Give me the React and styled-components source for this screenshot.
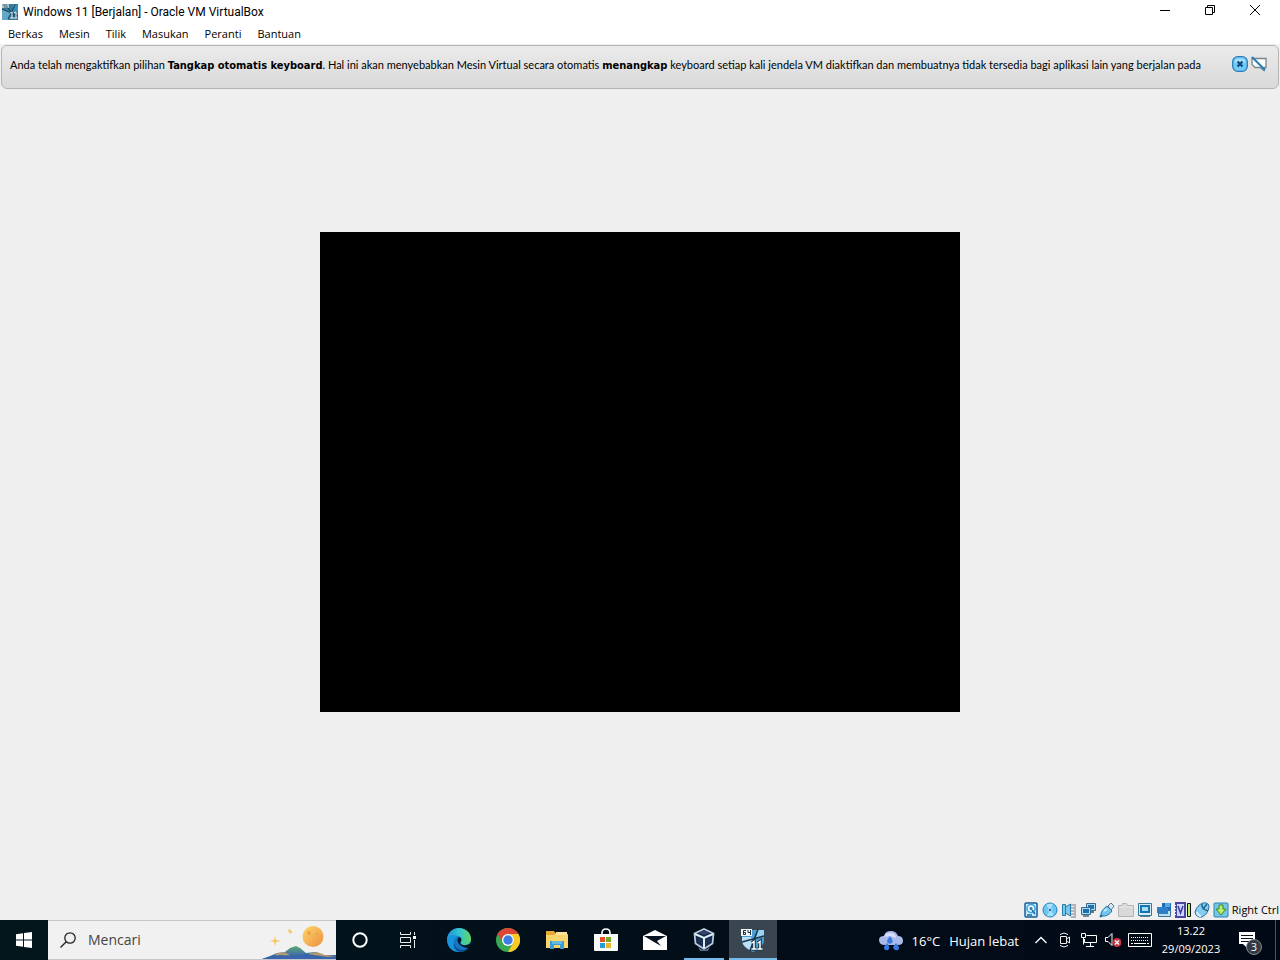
import React from "react";
import styled, { createGlobalStyle, css } from "styled-components";

const GlobalStyle = createGlobalStyle`
  *, *::before, *::after { box-sizing: border-box; }
  html, body, #root { height: 100%; }
  body { margin: 0; background: #efefef; }
  button, input { font: inherit; color: inherit; }
`;

const Desktop = styled.div`
  display: flex;
  flex-direction: column;
  min-height: 100vh;
  color: #000;
  font-family: "Open Sans", sans-serif;
  font-size: 12px;
  line-height: 16px;
`;

const TitleBar = styled.header`
  display: flex;
  align-items: center;
  height: 24px;
  padding: 0 3px 0 2px;
  background: #fff;
`;

const Title = styled.h1`
  flex: 1;
  margin: 0 0 0 5px;
  font-family: Roboto, sans-serif;
  font-size: 12px;
  font-weight: 400;
  line-height: 16px;
  white-space: nowrap;
`;

const PlainButton = styled.button`
  display: flex;
  align-items: center;
  justify-content: center;
  padding: 0;
  border: 0;
  background: transparent;
`;

const WindowButton = styled(PlainButton)`
  width: 45px;
  height: 24px;
  padding-bottom: 4px;
`;

const MenuBar = styled.nav`
  display: flex;
  height: 20px;
  background: #fff;
`;

const MenuItem = styled(PlainButton)`
  padding: 0 8px;
  font-size: 11px;
`;

const Stage = styled.main`
  flex: 1;
  display: flex;
  flex-direction: column;
`;

const Banner = styled.section`
  display: flex;
  align-items: flex-start;
  justify-content: space-between;
  height: 44px;
  margin: 1px 1px 0;
  padding: 10px 11px 0 8px;
  border: 1px solid #b4b4b4;
  border-radius: 6px;
  background: linear-gradient(#ebebeb, #d9d9d9);
`;

const BannerText = styled.p`
  margin: 1px 0 0;
  font-family: Lato, sans-serif;
  font-size: 11px;
  line-height: 16px;
  white-space: nowrap;
  b { font-family: "DejaVu Sans Condensed", "DejaVu Sans", sans-serif; }
`;

const BannerActions = styled.div`
  display: flex;
  gap: 3px;
`;

const ScreenArea = styled.div`
  flex: 1;
  display: grid;
  place-items: center;
  padding-bottom: 45px;
`;

const GuestScreen = styled.div`
  width: 640px;
  max-width: 100%;
  aspect-ratio: 4 / 3;
  background: #000;
`;

const StatusBar = styled.footer`
  display: flex;
  align-items: center;
  justify-content: flex-end;
  gap: 3px;
  height: 20px;
  padding-right: 1px;
`;

const HostKey = styled.span`
  font-size: 11px;
  white-space: nowrap;
`;

const Taskbar = styled.div`
  display: flex;
  height: 40px;
  background: linear-gradient(90deg, #02161c, #020d18 60%, #020916);
  color: #fff;
`;

const StartButton = styled(PlainButton)`
  width: 48px;
`;

const Search = styled.label`
  display: flex;
  align-items: center;
  width: 288px;
  padding-left: 12px;
  border: 1px solid #c4c8c8;
  border-width: 1px 0;
  background: #f1f1f1;
  color: #222;
`;

const SearchInput = styled.input`
  flex: 1;
  min-width: 0;
  padding: 0;
  margin-left: 12px;
  border: 0;
  outline: 0;
  background: transparent;
  font-size: 14px;
  line-height: 20px;
  &::placeholder { color: #444; opacity: 1; }
`;

const Apps = styled.div`
  display: flex;
  gap: 1px;
  margin-left: 3px;
`;

const TaskButton = styled(PlainButton)`
  width: 48px;
  ${(p) => p.$active && css`
    background: #3a464f;
    box-shadow: inset 0 -2px #76b9ed;
  `}
  ${(p) => p.$running && css`
    background: linear-gradient(#76b9ed, #76b9ed) center bottom / 40px 2px no-repeat;
  `}
`;

const Tray = styled.div`
  display: flex;
  margin-left: auto;
`;

const Weather = styled(PlainButton)`
  gap: 9px;
  padding: 2px 10px 0 0;
  font-size: 13px;
  white-space: nowrap;
`;

const TrayButton = styled(PlainButton)`
  width: 24px;
`;

const KeyboardButton = styled(PlainButton)`
  width: 30px;
`;

const Clock = styled(PlainButton)`
  flex-direction: column;
  width: 72px;
  font-size: 11px;
  line-height: 18px;
`;

const Notifications = styled(PlainButton)`
  width: 48px;
`;

const ShowDesktop = styled(PlainButton)`
  width: 5px;
  border-left: 1px solid #4b5560;
`;

const Svg = ({ w = 16, h = w, box, children }) => (
  <svg width={w} height={h} viewBox={box || `0 0 ${w} ${h}`} fill="none" aria-hidden="true">
    {children}
  </svg>
);

const MachineIcon = ({ size }) => (
  <Svg w={size} box="0 0 24 24">
    <path d="M1 2h22v11q-1 7-11 11Q2 20 1 13z" fill="#4b9fd2" />
    <path d="M15 2h8v7l-10 3z" fill="#9ad4f5" />
    <path d="M1 9h9l2 4-3 9Q2 19 1 13z" fill="#b9e0f6" />
    <path d="M17 1L9 23M1 14l22-6" stroke="#1c3a50" strokeWidth="1.800" />
    <rect x="0" y="1" width="11" height="7" fill="#f3f7f8" />
    <path d="M5 2.500H2.500v4h2v-2h-2M7 2v2.500h2.500M9.500 2v5" stroke="#18303e" />
    <path d="M11 15l2-1.500V20.500M10.500 21h5M17 15l2-1.500V20.500M16.500 21h5" stroke="#19394d" strokeWidth="3.600" />
    <path d="M11 15l2-1.500V20.500M10.500 21h5M17 15l2-1.500V20.500M16.500 21h5" stroke="#fff" strokeWidth="1.500" />
  </Svg>
);

const SmallMachineIcon = () => (
  <Svg w={16}>
    <path d="M0 0h16v16H0z" fill="#347796" />
    <path d="M0 6l6 1 3 3-3 6H0z" fill="#63a9c7" />
    <path d="M10 1h6v6l-5 2z" fill="#378eb7" />
    <path d="M13 1L6 15M0 5l16 7M6 4l7 10" stroke="#163e56" />
    <path d="M0 0h7v4H0z" fill="#a7c1cc" />
    <path d="M1 1h4M2 3h4" stroke="#476b7b" />
    <path d="M8 9l2-1v6m2-5l2-1v6M8 14h7" stroke="#e7f4fa" />
  </Svg>
);

const HardDiskIcon = () => (
  <Svg>
    <rect x="2" y="1" width="12" height="14" rx="1" fill="#c8e8fa" stroke="#155e96" strokeWidth="1.500" />
    <circle cx="8" cy="6.500" r="4" fill="#f5fcff" stroke="#36a2de" strokeWidth="1.500" />
    <circle cx="8" cy="6.500" r="1.500" fill="#1b76b4" />
    <path d="M9 8l3 4M4 13h5" stroke="#1868a2" strokeWidth="1.500" />
  </Svg>
);
const OpticalIcon = () => (
  <Svg>
    <circle cx="8" cy="8" r="7" fill="#6cc6f2" stroke="#2782b9" />
    <path d="M8 8L4 3q4-2 7-1zM8 8l4 5q-4 2-7 1z" fill="#a7e2fb" />
    <circle cx="8" cy="8" r="1.800" fill="#226c9d" stroke="#b8e5fa" />
  </Svg>
);
const AudioIcon = () => (
  <Svg>
    <path d="M10 3h4v12h-4M10 6h3m-3 3h3m-3 3h3" stroke="#b0b5ba" strokeWidth="2" />
    <path d="M1.500 2.500h3v11h-3zM4.500 5l5-3v12l-5-3z" fill="#76c8ee" stroke="#2b7ba8" />
  </Svg>
);
const NetworkIcon = () => (
  <Svg>
    <path d="M6.500 1.500h9v7h-9z" fill="#aadcf5" stroke="#386b8e" />
    <path d="M8 3h6v4H8z" fill="#1d73b3" />
    <path d="M9 10h5" stroke="#687681" strokeWidth="2" />
    <path d="M1.500 5.500h9v7h-9z" fill="#aadcf5" stroke="#386b8e" />
    <path d="M3 7h6v4H3z" fill="#1b70b1" />
    <path d="M3 14h6" stroke="#788793" strokeWidth="2" />
  </Svg>
);
const UsbIcon = () => (
  <Svg>
    <path d="M2 14Q1 9 8 4l5 5q-4 6-11 5z" fill="#6fc7f1" stroke="#287caa" />
    <path d="M9 4l3-3 3 3-3 4z" fill="#d9e8f0" stroke="#4d7e99" />
    <path d="M1 15l2-2" stroke="#276c95" strokeWidth="2" />
    <path d="M5 9l3-2" stroke="#c8ecfd" strokeWidth="2" />
  </Svg>
);
const SharedFolderIcon = () => (
  <Svg>
    <path d="M.5 3.500h3l1-2h4l1 2h6v11H.5z" fill="#d9d9d9" stroke="#b4b4b4" />
    <path d="M1 5h14" stroke="#e9e9e9" />
  </Svg>
);
const DisplayIcon = () => (
  <Svg>
    <path d="M1.500 1.500h13v12h-13z" fill="#d8effa" stroke="#33759b" />
    <path d="M4 4h8v6H4z" fill="#a5def6" stroke="#1775b4" strokeWidth="2" />
    <path d="M3 14.500h10" stroke="#527f99" />
  </Svg>
);
const RecordingIcon = () => (
  <Svg>
    <path d="M6 1h9v8H6z" fill="#236ab4" />
    <path d="M9 1h5v4H9z" fill="#57a8de" />
    <path d="M1 5h10v6H1z" fill="#2c84ce" />
    <path d="M2.500 8.500h12v6h-12z" fill="#c0dceb" stroke="#397399" />
    <path d="M3 6h9v6H3z" fill="#2d80c8" />
  </Svg>
);
const VirtualizationIcon = () => (
  <Svg>
    <rect x="1" y="1" width="9" height="14" fill="#cfd5ff" stroke="#4548a0" strokeWidth="2" />
    <path d="M0 3.500h1m-1 3h1m-1 3h1m-1 3h1" stroke="#efefef" />
    <path d="M3 4l2.500 7L8 4" stroke="#373b9d" strokeWidth="1.500" />
    <path d="M12.500 1.500h3v13h-3z" fill="#b7ef66" stroke="#111" />
  </Svg>
);
const MouseIcon = () => (
  <Svg>
    <path d="M1 10Q3 3 9 1q6-1 6 4-1 7-7 10-6 1-7-5z" fill="#85cdf0" stroke="#2b719a" />
    <path d="M8 2q-1 5 6 7M9 7l4-5" stroke="#205f8e" strokeWidth="1.500" />
    <path d="M3 10q1 4 4 4" stroke="#d7f3ff" strokeWidth="2" />
  </Svg>
);
const HostCaptureIcon = () => (
  <Svg>
    <rect x="1" y="1" width="14" height="14" rx="1" fill="#77c6e9" stroke="#2686b0" />
    <path d="M6 3h4v4h3l-5 6-5-6h3z" fill="#b9ef68" stroke="#388326" />
  </Svg>
);

const indicators = [
  ["Hard disk", HardDiskIcon], ["Cakram optik", OpticalIcon], ["Audio", AudioIcon],
  ["Jaringan", NetworkIcon], ["USB", UsbIcon], ["Folder bersama", SharedFolderIcon],
  ["Layar", DisplayIcon], ["Perekaman", RecordingIcon], ["Virtualisasi", VirtualizationIcon],
  ["Tetikus", MouseIcon], ["Keyboard", HostCaptureIcon],
];

const LandscapeArt = () => (
  <Svg w={76} h={38}>
    <defs>
      <linearGradient id="moon" x1="0" y1="0" x2="1" y2="1">
        <stop stopColor="#ffd76b" /><stop offset="1" stopColor="#eb8f40" />
      </linearGradient>
      <linearGradient id="hills" x1="0" y1="0" x2="0" y2="1">
        <stop stopColor="#5aa86b" /><stop offset=".5" stopColor="#4a809c" /><stop offset="1" stopColor="#2953a4" />
      </linearGradient>
    </defs>
    <circle cx="53" cy="15.500" r="10.500" fill="url(#moon)" />
    <circle cx="49" cy="12" r="2" fill="#e9a64c" />
    <circle cx="57" cy="13" r="1.500" fill="#e9a64c" />
    <path d="M15 15l1 4 5 1-5 1-1 4-1-4-4-1 4-1zM30 8l1 2 2 1-2 1-1 1-1-2-1-1 1-2z" fill="#f4c65c" />
    <path d="M2 38l8-3 7-3 8-1 5-4 6-2 4 2 6 5 9-1 8 3h13v4z" fill="url(#hills)" />
    <path d="M14 33l10-2 6 3-10 2zM48 33l9-2 8 3 11 1-8 1z" fill="#b29a72" />
    <path d="M2 38l18-4 13 1 13-2 12 3 18 0v2z" fill="#3a64ad" />
  </Svg>
);

const CortanaIcon = () => <Svg w={16}><circle cx="8" cy="8" r="6.700" stroke="#fff" strokeWidth="2" /></Svg>;
const TaskViewIcon = () => (
  <Svg w={18} h={16}>
    <path d="M1.500 0v2.500h10V0M1.500 16v-2.500h10V16M1.500 5.500h10v5h-10zM15.500 0v3M15.500 8v8" stroke="#e9eeee" />
    <path d="M14 4h3v3h-3z" fill="#fff" />
  </Svg>
);
const EdgeIcon = () => (
  <Svg w={24}>
    <defs>
      <linearGradient id="edgeTop" x1="0" y1="0" x2="1" y2="0">
        <stop stopColor="#1b94dc" /><stop offset=".55" stopColor="#36c6ce" /><stop offset="1" stopColor="#65d55b" />
      </linearGradient>
    </defs>
    <circle cx="12" cy="12" r="12" fill="#1476c6" />
    <path d="M0 11C1 4 6 0 12 0c7 0 12 5 12 11 0 4-3 6-7 6-3 0-4-1-3-3 2-3 0-6-4-6-5 0-9 2-10 7z" fill="url(#edgeTop)" />
    <path d="M0 11q5-6 11-3-5 3-4 9 1 4 6 7Q1 24 0 11z" fill="#1894dc" />
    <path d="M9 10q-4 6 1 10 5 4 11 0-4 6-11 3Q4 18 9 10z" fill="#0b4e91" />
    <path d="M12 9q3 1 2 4-2 3 2 4 4 1 8-2v3l-2 2q-6 0-10-4-3-4 0-7z" fill="#061820" />
  </Svg>
);
const ChromeIcon = () => (
  <Svg w={24}>
    <circle cx="12" cy="12" r="12" fill="#39a852" />
    <path d="M1.600 6A12 12 0 0 1 22.400 6H12a6 6 0 0 0-5.200 9z" fill="#e04638" />
    <path d="M22.400 6A12 12 0 0 1 12 24l5.200-9A6 6 0 0 0 12 6z" fill="#fbc926" />
    <circle cx="12" cy="12" r="6" fill="#fff" />
    <circle cx="12" cy="12" r="4.700" fill="#3c7de2" />
  </Svg>
);
const ExplorerIcon = () => (
  <Svg w={22} h={20}>
    <path d="M0 1h8l2 3h12v14H0z" fill="#e7aa32" />
    <path d="M0 5h22v13H0z" fill="#f9d56c" />
    <path d="M10 2h11v3H9z" fill="#ffe29a" />
    <path d="M4 19v-8h14v8h-4v-4H8v4z" fill="#3b9bd5" />
    <path d="M6 11h10v3H6z" fill="#65b8e2" />
  </Svg>
);
const StoreIcon = () => (
  <Svg w={24} h={24}>
    <path d="M8 7V5q0-4 4-4t4 4v2" stroke="#fff" strokeWidth="1.600" />
    <path d="M0 6h24v16q0 1-1 1H1q-1 0-1-1z" fill="#f8fbfa" />
    <path d="M6 9h5v5H6z" fill="#e3512c" /><path d="M12 9h5v5h-5z" fill="#79a928" />
    <path d="M6 15h5v5H6z" fill="#269bd6" /><path d="M12 15h5v5h-5z" fill="#efb42b" />
  </Svg>
);
const MailIcon = () => (
  <Svg w={24} h={20}>
    <path d="M0 6L12 0l12 6v14H0z" fill="#fff" />
    <path d="M1 6h22l-9 5 4 5-7-4z" fill="#061421" />
  </Svg>
);
const VirtualBoxIcon = () => (
  <Svg w={22} h={24}>
    <path d="M5 18q6 8 12 0l-2 5H7z" fill="#526c8a" />
    <path d="M1.500 5.500L11 1l9.500 4.500-1 10L11 21l-8.500-5.500z" fill="#162b49" stroke="#b8cadf" strokeWidth="1.800" />
    <path d="M2 6l9 4 9-4M11 10v10" stroke="#e2edf8" strokeWidth="2" />
    <path d="M6 5l5-2 5 2-5 2z" fill="#304664" />
    <path d="M4 9l5 2v6l-4-3zM18 9l-5 2v6l4-3z" fill="#1b3253" />
  </Svg>
);
const apps = [
  ["Microsoft Edge", EdgeIcon], ["Google Chrome", ChromeIcon], ["File Explorer", ExplorerIcon],
  ["Microsoft Store", StoreIcon], ["Mail", MailIcon], ["VirtualBox", VirtualBoxIcon],
];

export default function App() {
  return (
    <>
      <GlobalStyle />
      <Desktop>
        <TitleBar>
          <SmallMachineIcon />
          <Title>Windows 11 [Berjalan] - Oracle VM VirtualBox</Title>
          <WindowButton aria-label="Minimalkan">
            <Svg w={10}><path d="M0 5.500h10" stroke="#000" /></Svg>
          </WindowButton>
          <WindowButton aria-label="Pulihkan">
            <Svg w={10}><path d="M.5 2.500h7v7h-7zM2.500 2.500v-2h7v7h-2" stroke="#000" /></Svg>
          </WindowButton>
          <WindowButton aria-label="Tutup">
            <Svg w={10}><path d="M0 0l10 10M10 0L0 10" stroke="#000" /></Svg>
          </WindowButton>
        </TitleBar>
        <MenuBar>
          {["Berkas", "Mesin", "Tilik", "Masukan", "Peranti", "Bantuan"].map((m) => (
            <MenuItem key={m}>{m}</MenuItem>
          ))}
        </MenuBar>
        <Stage>
          <Banner>
            <BannerText>
              Anda telah mengaktifkan pilihan <b>Tangkap otomatis keyboard</b>. Hal ini akan menyebabkan Mesin
              Virtual secara otomatis <b>menangkap</b> keyboard setiap kali jendela VM diaktifkan dan membuatnya
              tidak tersedia bagi aplikasi lain yang berjalan pada
            </BannerText>
            <BannerActions>
              <PlainButton aria-label="Tutup pesan">
                <Svg>
                  <rect x=".7" y=".7" width="14.600" height="14.600" rx="5" fill="#71caf7" stroke="#2a7eb5" strokeWidth="1.300" />
                  <path d="M3 4q5-3 10 0v3H3z" fill="#a7e0fc" />
                  <path d="M5.500 5.500l5 5m0-5l-5 5" stroke="#134d80" strokeWidth="2.400" />
                </Svg>
              </PlainButton>
              <PlainButton aria-label="Jangan tampilkan lagi">
                <Svg>
                  <path d="M1 2.500h14v9h-2v3l-4-3H4l-3-3z" fill="#fff" stroke="#78858d" strokeWidth="1.300" />
                  <path d="M1 1l13 13" stroke="#287db4" strokeWidth="2" />
                </Svg>
              </PlainButton>
            </BannerActions>
          </Banner>
          <ScreenArea>
            <GuestScreen role="img" aria-label="Layar mesin virtual" />
          </ScreenArea>
        </Stage>
        <StatusBar>
          {indicators.map(([name, Icon]) => (
            <PlainButton key={name} aria-label={name}><Icon /></PlainButton>
          ))}
          <HostKey>Right Ctrl</HostKey>
        </StatusBar>
        <Taskbar>
          <StartButton aria-label="Mulai">
            <Svg w={16}>
              <path d="M0 2.300l7-1v6.200H0zM8 1.100L16 0v7.500H8zM0 8.500h7v6.200l-7-1zM8 8.500h8V16l-8-1.100z" fill="#fff" />
            </Svg>
          </StartButton>
          <Search>
            <Svg w={16}>
              <circle cx="10" cy="6" r="5.200" stroke="#222" strokeWidth="1.300" />
              <path d="M6.200 9.700L.5 15.500" stroke="#222" strokeWidth="1.300" />
            </Svg>
            <SearchInput type="text" placeholder="Mencari" aria-label="Mencari" />
            <LandscapeArt />
          </Search>
          <TaskButton aria-label="Cortana"><CortanaIcon /></TaskButton>
          <TaskButton aria-label="Tampilan tugas"><TaskViewIcon /></TaskButton>
          <Apps>
            {apps.map(([name, Icon]) => (
              <TaskButton key={name} aria-label={name} $running={name === "VirtualBox"}><Icon /></TaskButton>
            ))}
            <TaskButton aria-label="Windows 11" $active><MachineIcon size={24} /></TaskButton>
          </Apps>
          <Tray>
            <Weather>
              <Svg w={24} h={20}>
                <path d="M6 14q-6 0-6-5 0-4 5-4 1-5 7-5 5 0 7 5 5 0 5 5 0 4-5 4z" fill="#a9b9ea" />
                <path d="M5 6q2-5 8-4 4 1 4 5-6-3-12-1z" fill="#d7def7" />
                <path d="M11 5q4 5 2 7-3 2-5-1 0-3 3-6zM8 12q4 5 1 7-4 1-4-3zM17 12q5 5 2 7-4 1-5-3z" fill="#3879e7" />
              </Svg>
              <span>16°C</span><span>Hujan lebat</span>
            </Weather>
            <TrayButton aria-label="Ikon tersembunyi">
              <Svg w={12} h={8}><path d="M.5 7L6 1.500 11.500 7" stroke="#fff" strokeWidth="1.300" /></Svg>
            </TrayButton>
            <TrayButton aria-label="Rapat">
              <Svg w={14} h={16}>
                <path d="M2.500 4.500h6v7h-6zM8.500 7l3-2v6l-3-2M2 2.500q4-3 8 0M2 13.500q4 3 8 0" stroke="#eee" />
              </Svg>
            </TrayButton>
            <TrayButton aria-label="Jaringan">
              <Svg w={16} h={14}>
                <path d="M5.500 2.500h10v7h-12V6M.5.500h4v4h-4zM2.500 4.500v7M9.500 9.500v4M5 13.500h8" stroke="#fff" />
              </Svg>
            </TrayButton>
            <TrayButton aria-label="Volume">
              <Svg w={16} h={14}>
                <path d="M.5 4.500H3l4-4v12l-4-4H.5z" stroke="#fff" />
                <circle cx="12" cy="9.500" r="4.500" fill="#c93541" />
                <path d="M10 7.500l4 4m0-4l-4 4" stroke="#fff" strokeWidth="1.300" />
              </Svg>
            </TrayButton>
            <KeyboardButton aria-label="Keyboard sentuh">
              <Svg w={24} h={14}>
                <path d="M.5.500h23v13H.5z" stroke="#fff" />
                <path d="M3 4.500h18M3 7.500h18" stroke="#fff" strokeDasharray="1 1" />
                <path d="M3 10.500h2m1 0h12m1 0h2" stroke="#fff" />
              </Svg>
            </KeyboardButton>
            <Clock><span>13.22</span><span>29/09/2023</span></Clock>
            <Notifications aria-label="3 pemberitahuan">
              <Svg w={26} h={30}>
                <path d="M1 7h16v12H9v4l-4-4H1z" fill="#fff" />
                <path d="M3 10.500h12M3 13.500h12M3 16.500h8" stroke="#07101c" />
                <circle cx="16" cy="22" r="7.500" fill="#343a42" stroke="#858a90" />
                <text x="16" y="26" textAnchor="middle" fill="#fff" fontFamily="Open Sans, sans-serif" fontSize="11">3</text>
              </Svg>
            </Notifications>
            <ShowDesktop aria-label="Tampilkan desktop" />
          </Tray>
        </Taskbar>
      </Desktop>
    </>
  );
}
